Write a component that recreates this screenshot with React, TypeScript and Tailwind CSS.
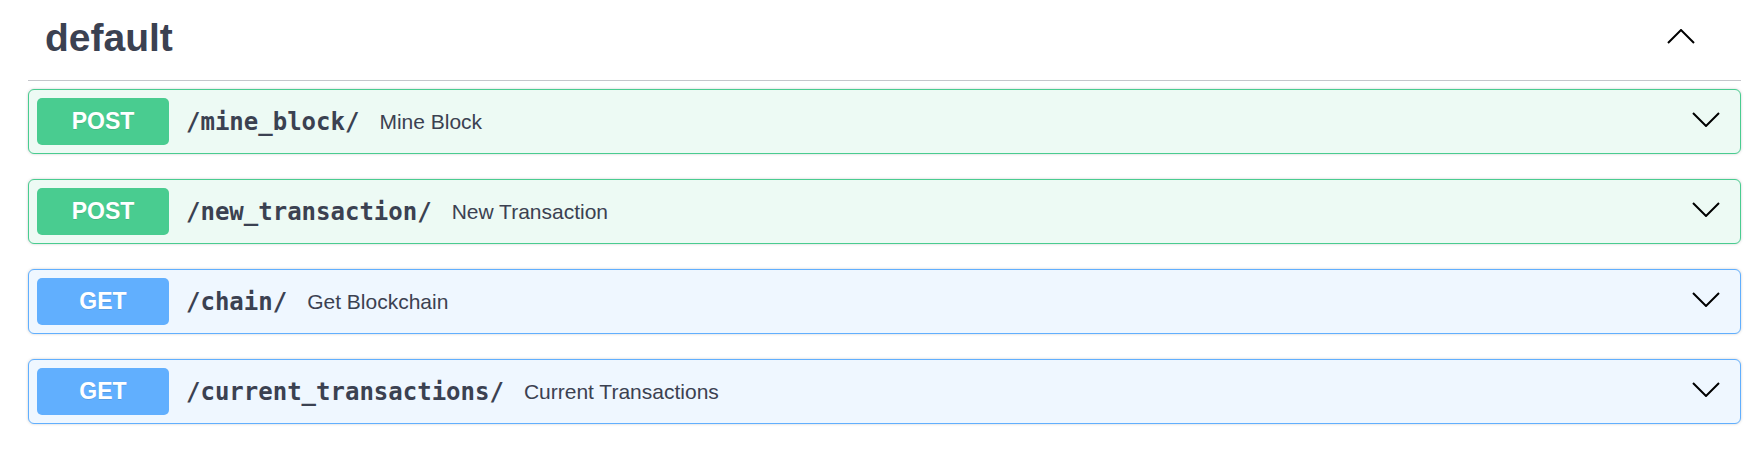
import React from "react";

type Op = { method: "POST" | "GET"; path: string; summary: string };

const ops: Op[] = [
  { method: "POST", path: "/mine_block/", summary: "Mine Block" },
  { method: "POST", path: "/new_transaction/", summary: "New Transaction" },
  { method: "GET", path: "/chain/", summary: "Get Blockchain" },
  { method: "GET", path: "/current_transactions/", summary: "Current Transactions" },
];

function ChevronDown() {
  return (
    <svg width="28" height="15" viewBox="0 0 28 15" className="ml-auto mr-[12px] mb-[5px] shrink-0">
      <polyline points="1,1 14,14 27,1" fill="none" stroke="#000" strokeWidth="2" />
    </svg>
  );
}

function ChevronUp() {
  return (
    <svg width="28" height="15" viewBox="0 0 28 15" className="mr-[46px] mb-[4px] shrink-0">
      <polyline points="1,14 14,1 27,14" fill="none" stroke="#000" strokeWidth="2" />
    </svg>
  );
}

function OpBlock({ op }: { op: Op }) {
  const post = op.method === "POST";
  return (
    <div
      className={
        post
          ? "flex items-center h-[65px] p-[8px] border border-[#49cc90] bg-[#edfaf4] rounded-[6px] shadow-[0_0_3px_rgba(0,0,0,0.19)]"
          : "flex items-center h-[65px] p-[8px] border border-[#61affe] bg-[#eff7ff] rounded-[6px] shadow-[0_0_3px_rgba(0,0,0,0.19)]"
      }
    >
      <div
        className={
          post
            ? "flex items-center justify-center w-[132px] h-[47px] shrink-0 rounded-[5px] bg-[#49cc90] text-white font-bold text-[23px] [text-shadow:0_1px_0_rgba(0,0,0,0.1)] font-['Liberation_Sans',Arial,sans-serif]"
            : "flex items-center justify-center w-[132px] h-[47px] shrink-0 rounded-[5px] bg-[#61affe] text-white font-bold text-[23px] [text-shadow:0_1px_0_rgba(0,0,0,0.1)] font-['Liberation_Sans',Arial,sans-serif]"
        }
      >
        {op.method}
      </div>
      <span className="ml-[17px] text-[24px] font-bold text-[#3b4151] font-['DejaVu_Sans_Mono',monospace] whitespace-nowrap">
        {op.path}
      </span>
      <span className="ml-[20px] text-[21px] text-[#3b4151] font-['Liberation_Sans',Arial,sans-serif] whitespace-nowrap">
        {op.summary}
      </span>
      <ChevronDown />
    </div>
  );
}

export default function App() {
  return (
    <div className="w-full min-h-[461px] bg-white pl-[28px] pr-[17px]">
      <div className="flex items-center justify-between h-[81px] pb-[4px] border-b border-[#c4c6cb]">
        <h3 className="pl-[17px] text-[39px] font-bold text-[#3b4151] font-['Liberation_Sans',Arial,sans-serif]">
          default
        </h3>
        <ChevronUp />
      </div>
      <div className="mt-[8px] flex flex-col gap-[25px]">
        {ops.map((op) => (
          <OpBlock key={op.path} op={op} />
        ))}
      </div>
    </div>
  );
}
